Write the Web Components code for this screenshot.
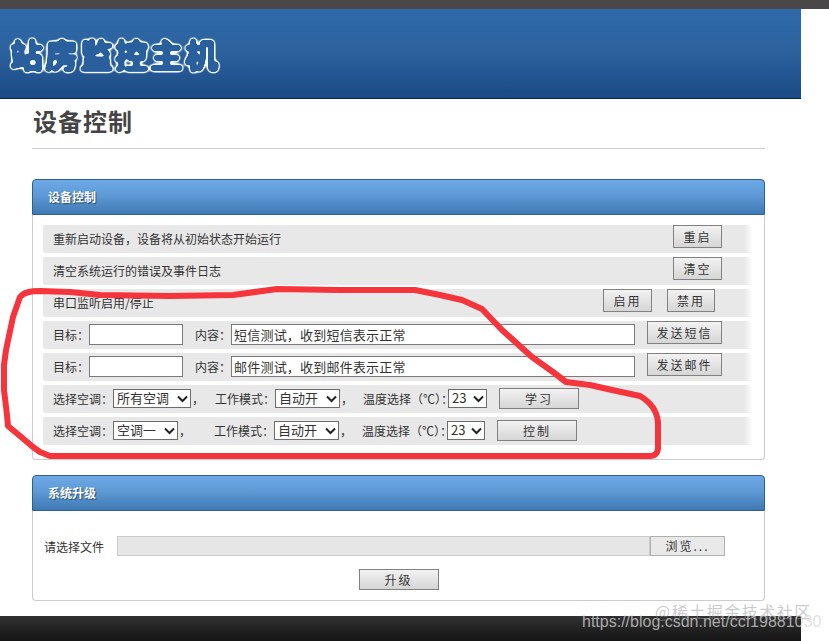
<!DOCTYPE html>
<html lang="zh">
<head>
<meta charset="utf-8">
<title>设备控制</title>
<style>
  html, body { margin: 0; padding: 0; background: #fff; overflow: hidden; }
  body { position: relative; height: 641px; font: 12px "Noto Sans CJK SC", "Liberation Sans", sans-serif; color: #333; }
  .wrap { width: 801px; }
</style>
</head>
<body>
<top-strip></top-strip>
<div class="wrap">
  <site-header title-text="站房监控主机"></site-header>
  <page-main>
    <page-title>设备控制</page-title>

    <ctl-panel heading="设备控制">
      <ctl-stack>
        <ctl-row>
          <span>重新启动设备，设备将从初始状态开始运行</span>
          <ctl-button slot="end" width="49">重启</ctl-button>
        </ctl-row>
        <ctl-row>
          <span>清空系统运行的错误及事件日志</span>
          <ctl-button slot="end" width="49">清空</ctl-button>
        </ctl-row>
        <ctl-row style="--end-pad:38px;--end-gap:15px">
          <span>串口监听启用/停止</span>
          <ctl-button slot="end" width="49">启用</ctl-button>
          <ctl-button slot="end" width="48">禁用</ctl-button>
        </ctl-row>
        <ctl-row>
          <span>目标：</span>
          <ctl-input width="94"></ctl-input>
          <span style="margin-left:12px">内容：</span>
          <ctl-input width="404" value="短信测试，收到短信表示正常"></ctl-input>
          <ctl-button slot="end" width="75">发送短信</ctl-button>
        </ctl-row>
        <ctl-row>
          <span>目标：</span>
          <ctl-input width="94"></ctl-input>
          <span style="margin-left:12px">内容：</span>
          <ctl-input width="404" value="邮件测试，收到邮件表示正常"></ctl-input>
          <ctl-button slot="end" width="75">发送邮件</ctl-button>
        </ctl-row>
        <ctl-row>
          <span style="width:60px">选择空调：</span>
          <ctl-select width="78" options="所有空调"></ctl-select>
          <span style="width:23px;margin-left:1px">，</span>
          <span style="width:60px">工作模式：</span>
          <ctl-select width="65" options="自动开"></ctl-select>
          <span style="width:22px;margin-left:1px">，</span>
          <span style="width:85px">温度选择（℃）：</span>
          <ctl-select width="39" options="23"></ctl-select>
          <ctl-button width="80" style="margin-left:12px;height:21px">学习</ctl-button>
        </ctl-row>
        <ctl-row>
          <span style="width:60px">选择空调：</span>
          <ctl-select width="65" options="空调一"></ctl-select>
          <span style="width:35px;margin-left:1px">，</span>
          <span style="width:60px">工作模式：</span>
          <ctl-select width="65" options="自动开"></ctl-select>
          <span style="width:22px;margin-left:1px">，</span>
          <span style="width:85px">温度选择（℃）：</span>
          <ctl-select width="38" options="23"></ctl-select>
          <ctl-button width="80" style="margin-left:12px;height:21px">控制</ctl-button>
        </ctl-row>
      </ctl-stack>
    </ctl-panel>

    <ctl-panel heading="系统升级" style="margin-top:15px">
      <upgrade-form></upgrade-form>
    </ctl-panel>
  </page-main>
  <site-footer></site-footer>
</div>
<red-mark></red-mark>
<water-mark></water-mark>

<script>
function shadow(el, html) {
  el.attachShadow({ mode: 'open' }).innerHTML = html;
}

class TopStrip extends HTMLElement {
  connectedCallback() {
    shadow(this, `<style>:host { display: block; height: 9px; background: #4a4749; }</style>`);
  }
}

class SiteHeader extends HTMLElement {
  connectedCallback() {
    // rounded bubble letters: grow the glyphs twice, white outside and blue inside
    shadow(this, `
      <style>
        :host {
          display: block; height: 90px; box-sizing: border-box;
          background: linear-gradient(#2f69a9, #2c639f 45%, #1b4a86);
          border-bottom: 1px solid #0a2343;
        }
        svg { display: block; }
        text { font: 700 33px "Noto Sans CJK SC", sans-serif; letter-spacing: 2px; fill: #fff; }
      </style>
      <svg width="300" height="89">
        <defs>
          <filter id="bubble" x="-5%" y="-20%" width="110%" height="140%" color-interpolation-filters="sRGB">
            <feGaussianBlur in="SourceAlpha" stdDeviation="1.9" result="b1"/>
            <feComponentTransfer in="b1" result="outer">
              <feFuncA type="linear" slope="9" intercept="-0.55"/>
            </feComponentTransfer>
            <feFlood flood-color="#f2f9fd"/>
            <feComposite in2="outer" operator="in" result="white"/>
            <feGaussianBlur in="SourceAlpha" stdDeviation="1.4" result="b2"/>
            <feComponentTransfer in="b2" result="inner">
              <feFuncA type="linear" slope="9" intercept="-1.6"/>
            </feComponentTransfer>
            <feFlood flood-color="#2a5f9e"/>
            <feComposite in2="inner" operator="in" result="blue"/>
            <feMerge><feMergeNode in="white"/><feMergeNode in="blue"/></feMerge>
          </filter>
        </defs>
        <text x="10" y="59" filter="url(#bubble)">${this.getAttribute('title-text')}</text>
      </svg>`);
  }
}

class PageMain extends HTMLElement {
  connectedCallback() {
    shadow(this, `<style>:host { display: block; width: 733px; padding-left: 32px; }</style><slot></slot>`);
  }
}

class PageTitle extends HTMLElement {
  connectedCallback() {
    shadow(this, `
      <style>
        :host {
          display: block; height: 50px; box-sizing: border-box; margin-bottom: 30px;
          padding: 5px 0 0 1px; border-bottom: 1px solid #ccc;
          font-size: 24px; font-weight: 700; line-height: 34px; letter-spacing: 1px; color: #444;
        }
      </style><slot></slot>`);
  }
}

class CtlPanel extends HTMLElement {
  connectedCallback() {
    shadow(this, `
      <style>
        :host { display: block; }
        header {
          height: 36px; box-sizing: border-box; padding: 0 0 2px 15px;
          display: flex; align-items: center;
          background: linear-gradient(#6ca9e6, #5f9ad6 45%, #3f79b4);
          border: 1px solid #2f5f90; border-radius: 4px 4px 0 0;
          color: #fff; font-size: 12px; font-weight: 700; text-shadow: 1px 1px 1px #234a72;
        }
        .body {
          border: 1px solid #ccc; border-top: 0; border-radius: 0 0 4px 4px;
        }
      </style>
      <header>${this.getAttribute('heading')}</header>
      <div class="body"><slot></slot></div>`);
  }
}

class CtlStack extends HTMLElement {
  connectedCallback() {
    shadow(this, `
      <style>
        :host { display: flex; flex-direction: column; gap: 4px; padding: 10px 0 14px 10px; }
      </style><slot></slot>`);
  }
}

class CtlRow extends HTMLElement {
  connectedCallback() {
    shadow(this, `
      <style>
        :host {
          display: flex; align-items: center; width: 710px; height: 28px; box-sizing: border-box;
          padding-left: 10px; border-radius: 2px; color: #333; font-size: 12px;
          background: linear-gradient(to right, #e8e8e8 calc(100% - 9px), #fff);
        }
        .main { display: flex; align-items: center; flex: 1; height: 100%; padding-bottom: 1px; box-sizing: border-box; }
        .end {
          display: flex; align-items: flex-start; align-self: flex-start;
          gap: var(--end-gap, 0); padding-right: var(--end-pad, 31px);
        }
        ::slotted(span) { white-space: nowrap; }
      </style>
      <div class="main"><slot></slot></div>
      <div class="end"><slot name="end"></slot></div>`);
  }
}

class CtlButton extends HTMLElement {
  connectedCallback() {
    shadow(this, `
      <style>
        :host {
          display: inline-flex; align-items: center; justify-content: center; flex: none;
          width: ${this.getAttribute('width')}px; height: 23px; box-sizing: border-box;
          padding-bottom: 1px;
          border: 1px solid #818181; letter-spacing: 2px; color: #333; font-size: 12px;
          background: linear-gradient(#f2f2f2, #d6d6d6);
        }
      </style><slot></slot>`);
  }
}

class CtlInput extends HTMLElement {
  connectedCallback() {
    const value = this.getAttribute('value') || '';
    shadow(this, `
      <style>
        :host { display: inline-block; flex: none; height: 21px; }
        input {
          display: block; width: ${this.getAttribute('width')}px; height: 21px; box-sizing: border-box;
          margin: 0; padding: 0 2px 1px; border: 1px solid #7a7a7a; background: #fff;
          font: 13px "Noto Sans CJK SC", sans-serif; letter-spacing: .2px; color: #333; outline: 0;
        }
      </style>
      <input type="text" value="${value}">`);
  }
}

class CtlSelect extends HTMLElement {
  connectedCallback() {
    const opts = this.getAttribute('options').split(',').map(o => `<option>${o}</option>`).join('');
    shadow(this, `
      <style>
        :host {
          display: inline-block; position: relative; flex: none; height: 19px;
          width: ${this.getAttribute('width')}px;
        }
        select {
          display: block; appearance: none; width: 100%; height: 19px; box-sizing: border-box;
          margin: 0; padding: 0 0 1px 3px; border: 1px solid #6d6d6d; border-radius: 0; background: #fff;
          font: 13px/16px "Noto Sans CJK SC", sans-serif; color: #333; outline: 0;
        }
        svg { position: absolute; right: 3px; top: 6px; pointer-events: none; }
      </style>
      <select>${opts}</select>
      <svg width="11" height="8" viewBox="0 0 11 8"><path d="M1 1.5l4.5 4.5L10 1.5" fill="none" stroke="#222" stroke-width="2"/></svg>`);
  }
}

class UpgradeForm extends HTMLElement {
  connectedCallback() {
    shadow(this, `
      <style>
        :host { display: flex; flex-direction: column; align-items: center; padding: 25px 0 10px; }
        .file { display: flex; align-items: center; align-self: flex-start; padding-left: 11px; }
        label { width: 73px; font-size: 12px; color: #333; }
        .path { width: 533px; height: 20px; box-sizing: border-box; background: #e6e6e6; border: 1px solid #ccc; }
        .browse {
          display: flex; align-items: center; justify-content: center;
          width: 75px; height: 20px; box-sizing: border-box; padding-bottom: 2px;
          border: 1px solid #b0b0b0; background: #e9e9e9; letter-spacing: 2px; color: #333; font-size: 12px;
        }
      </style>
      <div class="file">
        <label>请选择文件</label>
        <div class="path"></div>
        <div class="browse">浏览...</div>
      </div>
      <ctl-button width="80" style="height:21px;margin-top:13px">升级</ctl-button>`);
  }
}

class SiteFooter extends HTMLElement {
  connectedCallback() {
    shadow(this, `
      <style>
        :host { display: block; height: 25px; margin-top: 15px; background: linear-gradient(#323232, #141414); }
      </style>`);
  }
}

// hand drawn annotation lying over the form
class RedMark extends HTMLElement {
  connectedCallback() {
    shadow(this, `
      <style>:host { position: absolute; left: 0; top: 0; pointer-events: none; }</style>
      <svg width="829" height="641" style="display:block">
        <path d="M20 297 C24 292 30 291 40 291 L70 292 L100 295 L170 296 L233 295 L277 289 L340 290 L415 290
                 L440 295 L462 300 L482 309 L502 330 L532 357 L553 372 L566 382 L590 385 L612 390 L640 396
                 C652 403 657 412 658 422 L658 448 C658 453 655 456 650 456 L50 456
                 L40 452 L33 447 L20 436 L8 426 L7 415 L4 390 L4 365 L6 350 L13 317 Z"
              fill="none" stroke="#f5343b" stroke-width="6" stroke-linejoin="round"/>
      </svg>`);
  }
}

class WaterMark extends HTMLElement {
  connectedCallback() {
    shadow(this, `
      <style>
        :host { position: absolute; left: 0; top: 0; width: 829px; height: 641px; pointer-events: none; }
        .a { position: absolute; left: 655px; top: 600px; font-size: 16px; line-height: 22px; letter-spacing: 1.5px; color: rgba(150,150,150,.5); white-space: nowrap; }
        .b { position: absolute; left: 582px; top: 612px; font: 16px/20px "Liberation Sans", sans-serif; color: rgba(215,215,215,.75); white-space: nowrap; }
      </style>
      <div class="a">@稀土掘金技术社区</div>
      <div class="b">https://blog.csdn.net/ccf19881030</div>`);
  }
}

customElements.define('top-strip', TopStrip);
customElements.define('site-header', SiteHeader);
customElements.define('page-main', PageMain);
customElements.define('page-title', PageTitle);
customElements.define('ctl-panel', CtlPanel);
customElements.define('ctl-stack', CtlStack);
customElements.define('ctl-row', CtlRow);
customElements.define('ctl-button', CtlButton);
customElements.define('ctl-input', CtlInput);
customElements.define('ctl-select', CtlSelect);
customElements.define('upgrade-form', UpgradeForm);
customElements.define('site-footer', SiteFooter);
customElements.define('red-mark', RedMark);
customElements.define('water-mark', WaterMark);
</script>
</body>
</html>
